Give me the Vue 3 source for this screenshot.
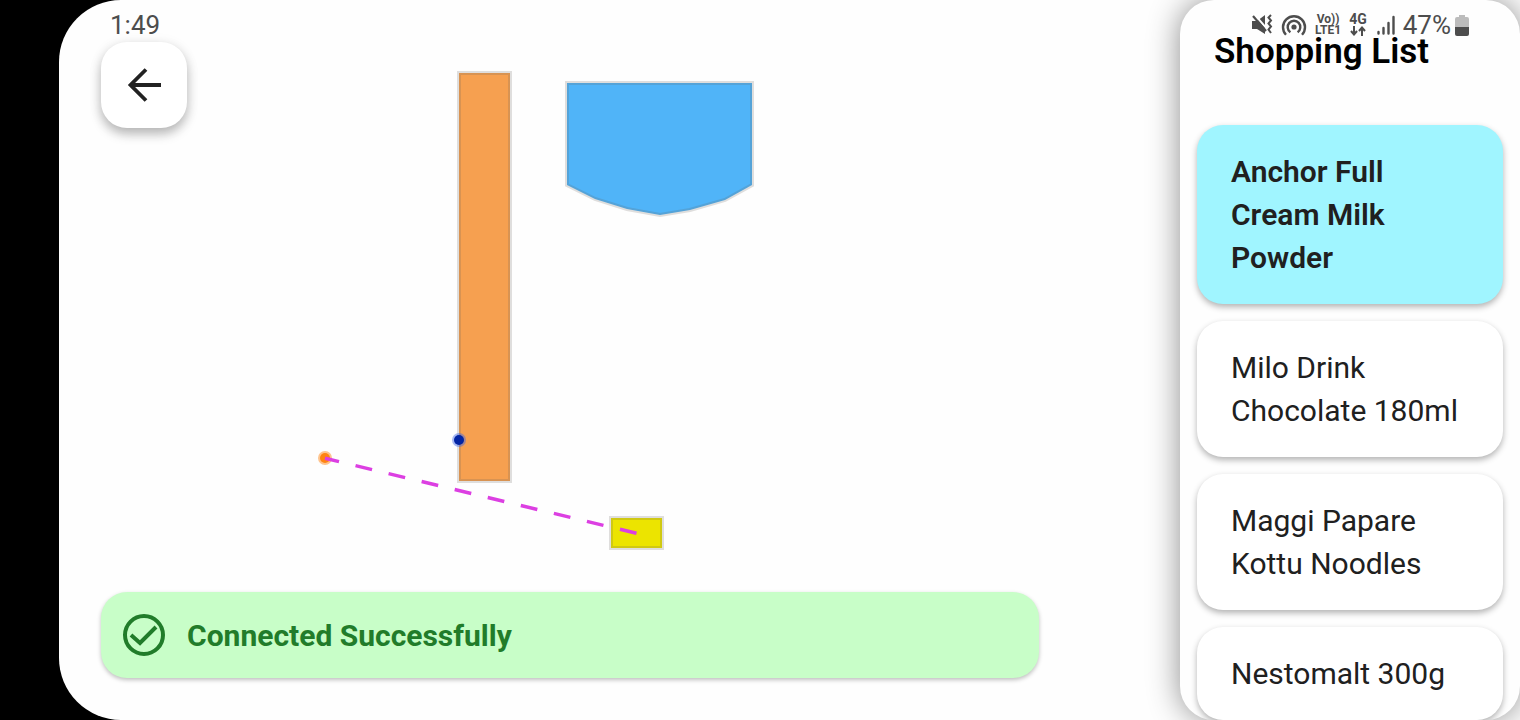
<script setup>
const items = [
  { name: 'Anchor Full Cream Milk Powder', active: true },
  { name: 'Milo Drink Chocolate 180ml', active: false },
  { name: 'Maggi Papare Kottu Noodles', active: false },
  { name: 'Nestomalt 300g', active: false },
]
</script>

<template>
  <div class="device">
    <div class="screen">
      <main class="stage">
        <svg class="map" aria-label="Store map" role="img">
          <g stroke-width="4" stroke-linejoin="miter">
            <rect x="400" y="73" width="51" height="408" fill="#f6a050" />
            <rect x="400" y="73" width="51" height="408" fill="none" class="edge" />
            <path d="M508 83H693V185L666 200L631 210L601 215L568 209L536 199L508 185Z" fill="#50b4f8" />
            <path d="M508 83H693V185L666 200L631 210L601 215L568 209L536 199L508 185Z" fill="none" class="edge" />
            <rect x="552" y="518" width="51" height="30" fill="#ece400" />
            <rect x="552" y="518" width="51" height="30" fill="none" class="edge" />
          </g>
          <circle cx="266" cy="458" r="7" fill="#ff8a1c" opacity="0.5" />
          <circle cx="266" cy="458" r="5" fill="#ff8412" />
          <circle cx="400" cy="440" r="7" fill="#3c64e8" opacity="0.45" />
          <circle cx="400" cy="440" r="5" fill="#0224a4" />
          <path d="M577.5 533.3L266 458.3" class="route" />
        </svg>

        <button class="back" type="button" aria-label="Back">
          <svg width="42" height="42" viewBox="0 0 42 42"><path d="M38 21H8M23 5.5L7.5 21L23 36.500" fill="none" stroke="#222" stroke-width="3.800" /></svg>
        </button>

        <div class="banner" role="status">
          <svg width="44" height="44" viewBox="0 0 44 44" fill="none" stroke="#217c2a" stroke-width="4">
            <circle cx="22" cy="22" r="19" />
            <path d="M9 22L18 30L34 14" />
          </svg>
          <span>Connected Successfully</span>
        </div>
      </main>

      <aside class="panel">
        <h1>Shopping List</h1>
        <ul>
          <li v-for="item in items" :key="item.name">
            <button type="button" class="card" :class="{ active: item.active }">{{ item.name }}</button>
          </li>
        </ul>
      </aside>
    </div>

    <header class="status">
      <span class="clock">1:49</span>
      <div class="indicators">
        <svg width="22" height="22" viewBox="0 0 22 22">
          <path d="M1 7H6L14 1V20L6 15H1Z" fill="#4d4d4d" />
          <path d="M3 0L17 16" stroke="#fff" stroke-width="2" />
          <path d="M2 2L15 17" stroke="#4d4d4d" stroke-width="2.200" />
          <path d="M20 1L17.500 3.500L20 6.500L17.500 9.500L20 12.500L17.500 15.500L20 19" fill="none" stroke="#4d4d4d" stroke-width="2" />
        </svg>
        <svg width="26" height="22" viewBox="0 0 26 22" fill="none" stroke="#4d4d4d" stroke-width="2.4">
          <circle cx="13" cy="13" r="2.6" fill="#4d4d4d" stroke="none" />
          <path d="M9.4 18.2A6.3 6.3 0 1 1 16.6 18.2" />
          <path d="M5 20.8A11 11 0 1 1 21 20.8" />
        </svg>
        <span class="stack"><span>Vo))</span><span>LTE1</span></span>
        <span class="stack net">
          <span>4G</span>
          <svg width="16" height="11" viewBox="0 0 16 11" fill="none" stroke="#4d4d4d" stroke-width="2"><path d="M4 1V9M1 6L4 9.5L7 6M12 11V3M9 6L12 2.5L15 6" /></svg>
        </span>
        <svg class="signal" width="18" height="20" viewBox="0 0 18 20" fill="none" stroke="#4d4d4d" stroke-width="2.400" stroke-linecap="round"><path d="M1.500 17V18.500M6.500 13V18.500M11.500 8V18.500M16.500 2V18.500" /></svg>
        <span class="percent">47%</span>
        <svg width="14" height="21" viewBox="0 0 14 21"><path d="M4 0H10V2H12Q14 2 14 4V12H0V4Q0 2 2 2H4Z" fill="#bcbcbc" /><path d="M0 12H14V19Q14 21 12 21H2Q0 21 0 19Z" fill="#4d4d4d" /></svg>
      </div>
    </header>
  </div>
</template>

<style>
body {
  background: #000;
}
</style>

<style scoped>
* {
  box-sizing: border-box;
}
.device {
  position: relative;
  height: 100vh;
  padding-left: 59px;
  background: #000;
  font-family: Roboto, sans-serif;
  overflow: hidden;
}
.screen {
  display: flex;
  height: 100%;
  background: #fefefe;
  border-radius: 62px 0 0 62px;
  overflow: hidden;
}
.stage {
  position: relative;
  flex: 1;
  display: flex;
  flex-direction: column;
  justify-content: space-between;
  align-items: flex-start;
  padding: 42px 141px 42px 42px;
}
.map {
  position: absolute;
  inset: 0;
  width: 100%;
  height: 100%;
}
.edge {
  stroke: rgba(100, 95, 90, 0.2);
}
.route {
  fill: none;
  stroke: #dc3fe2;
  stroke-width: 3.5px;
  stroke-dasharray: 17 17;
}
.back {
  position: relative;
  display: grid;
  place-items: center;
  width: 86px;
  height: 86px;
  padding: 0;
  border: 0;
  border-radius: 26px;
  background: #fff;
  box-shadow: 0 6px 11px rgba(0, 0, 0, 0.25), 0 2px 14px rgba(0, 0, 0, 0.08);
}
.banner {
  position: relative;
  display: flex;
  align-items: center;
  gap: 21px;
  align-self: stretch;
  padding: 21px;
  border-radius: 26px;
  background: #c8fec8;
  color: #217c2a;
  font-size: 30px;
  line-height: 43px;
  font-weight: 700;
  box-shadow: 0 2px 4px rgba(0, 0, 0, 0.25);
}
.panel {
  position: relative;
  width: 340px;
  padding: 30px 17px 0;
  border-radius: 34px;
  background: #fefefe;
  box-shadow: 0 0 32px rgba(0, 0, 0, 0.45);
  overflow: hidden;
}
h1 {
  margin: 0 0 52px;
  padding-left: 17px;
  color: #000;
  font-size: 35px;
  line-height: 43px;
  font-weight: 600;
}
ul {
  display: flex;
  flex-direction: column;
  gap: 17px;
  margin: 0;
  padding: 0;
  list-style: none;
}
.card {
  display: block;
  width: 100%;
  padding: 25px 34px;
  border: 0;
  border-radius: 26px;
  background: #fff;
  color: #202020;
  font-family: inherit;
  font-size: 30px;
  line-height: 43px;
  font-weight: 400;
  text-align: left;
  box-shadow: 0 3px 6px rgba(0, 0, 0, 0.3);
}
.card.active {
  background: #a0f5ff;
  font-weight: 600;
}
.status {
  position: absolute;
  top: 11px;
  left: 0;
  right: 0;
  display: flex;
  align-items: center;
  justify-content: space-between;
  padding: 0 51px 0 110px;
  color: #4d4d4d;
  font-size: 26px;
  line-height: 28px;
}
.indicators {
  display: flex;
  align-items: center;
  gap: 8px;
}
.stack {
  display: flex;
  flex-direction: column;
  align-items: center;
  font-size: 12px;
  line-height: 11px;
  font-weight: 700;
}
.net {
  font-size: 14px;
}
.signal {
  margin-left: 2px;
}
.percent {
  margin-right: -4px;
}
</style>
